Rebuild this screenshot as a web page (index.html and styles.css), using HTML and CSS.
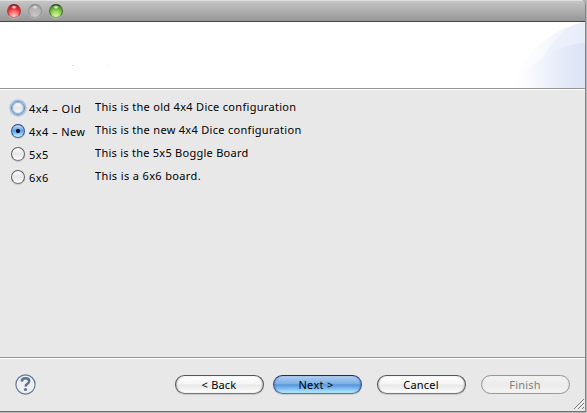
FILE: index.html
```html
<!DOCTYPE html>
<html lang="en">
<head>
<meta charset="utf-8">
<title>Board configuration</title>
<link rel="stylesheet" href="styles.css">
</head>
<body>
<div class="window">
  <div class="titlebar">
    <span class="light red"></span>
    <span class="light gray"></span>
    <span class="light green"></span>
  </div>
  <header class="banner">
    <svg class="speck" width="50" height="2" viewBox="0 0 50 2"><path d="M0 .5h2" stroke="#ddd"/><path d="M36 .5h2M42 .5h1" stroke="#f5f5f5"/></svg>
    <svg class="swoosh" width="75" height="66" viewBox="0 0 75 66">
      <defs>
        <linearGradient id="fade"><stop offset="0" stop-color="#fff"/><stop offset=".3" stop-color="#fbfcfe"/><stop offset="1" stop-color="#e9eefa"/></linearGradient>
        <linearGradient id="inner"><stop offset="0" stop-color="#fff"/><stop offset=".2" stop-color="#fbfcff"/><stop offset=".4" stop-color="#f2f5fc"/><stop offset=".7" stop-color="#e5eaf8"/><stop offset="1" stop-color="#dbe3f6"/></linearGradient>
      </defs>
      <path d="M2 66C15 28 43 6 75 0V66Z" fill="url(#fade)"/>
      <path d="M32 66V38C40 22 55 3 75 0V66Z" fill="#e6ecf9" opacity=".5"/>
      <path d="M0 66C23 38 49 22 75 21V66Z" fill="url(#inner)"/>
    </svg>
  </header>
  <main class="options">
    <label class="row"><span class="radio focus"></span><span class="name old">4x4 – Old</span><span class="desc d1">This is the old 4x4 Dice configuration</span></label>
    <label class="row"><span class="radio checked"></span><span class="name new">4x4 – New</span><span class="desc d2">This is the new 4x4 Dice configuration</span></label>
    <label class="row"><span class="radio"></span><span class="name">5x5</span><span class="desc d3">This is the 5x5 Boggle Board</span></label>
    <label class="row"><span class="radio"></span><span class="name">6x6</span><span class="desc d4">This is a 6x6 board.</span></label>
  </main>
  <footer class="footer">
    <span class="help"><svg width="21" height="21" viewBox="0 0 21 21" fill="none"><circle cx="10.5" cy="10.5" r="9.6" fill="#efeff0" stroke="#657998" stroke-width="1.2"/><path d="M6.8 7.6C6.9 5.4 8.4 4.3 10.5 4.3c2.2 0 3.7 1 3.7 2.9 0 2.6-3.6 2.5-3.6 5.2" stroke="#5d7191" stroke-width="2.5"/><circle cx="10.5" cy="15.500" r="1.600" fill="#5d7191"/></svg></span>
    <span class="button back">&lt; Back</span>
    <span class="button primary">Next &gt;</span>
    <span class="button cancel">Cancel</span>
    <span class="button disabled">Finish</span>
    <svg class="grip" width="12" height="12" viewBox="0 0 12 12"><path d="M1 11L11 1M5 11L11 5M9 11L11 9" stroke="#777"/><path d="M2 11.500L11.500 2M6 11.500L11.500 6" stroke="#fff" stroke-width=".6"/></svg>
  </footer>
</div>
</body>
</html>
```
FILE: styles.css
```css
* { box-sizing: border-box; }
html, body { margin: 0; height: 100%; overflow: hidden; }
body { font: 11px/14px "Noto Sans", "Open Sans", sans-serif; color: #000; background: #b5b5b5; }
.window {
  display: flex; flex-direction: column; width: 586px; height: 412px;
  border-right: 1px solid #858585; border-bottom: 1px solid #727272;
  border-top-right-radius: 5px; background: #e8e8e8; overflow: hidden;
}
.titlebar {
  display: flex; gap: 7px; height: 22px; padding: 3px 0 0 7px; flex: none;
  border-top: 1px solid #dedede; border-bottom: 1px solid #444;
  background: linear-gradient(#c5c5c5, #969696);
}
.light {
  width: 14px; height: 14px; border-radius: 50%; border: 1px solid #777;
  box-shadow: 0 1px 0 #ccc8;
}
.red { border-color: #6b2020 #a34444 #b77; background: radial-gradient(ellipse 3px 2px at 50% 18%, #fff, #fff0), radial-gradient(circle at 50% 92%, #ffc4c4 5%, #f66 40%, #dd252c 65%, #a41118 100%); }
.gray { border-color: #858585 #939393 #a5a5a5; background: radial-gradient(ellipse 3px 2px at 50% 18%, #eee, #eee0), radial-gradient(circle at 50% 90%, #c8c8c8, #b3b3b3 60%, #979797); }
.green { border-color: #244613 #4b7332 #8a9f79; background: radial-gradient(ellipse 3px 2px at 50% 18%, #fff, #fff0), radial-gradient(circle at 50% 92%, #d6f598 5%, #9bd55d 40%, #60ac35 65%, #2b6611 100%); }
.banner {
  display: flex; justify-content: space-between; align-items: flex-start;
  height: 68px; flex: none; background: #fff; padding-left: 72px;
  border-bottom: 1px solid #fff; box-shadow: inset 0 -1px #949494;
}
.speck { margin-top: 43px; }
.swoosh { display: block; }
.options { flex: 1; padding: 7px 0 0 11px; }
.row { display: flex; height: 23px; align-items: flex-start; }
.radio {
  width: 14px; height: 14px; margin: 4px 4px 0 0; border-radius: 50%; flex: none;
  border: 1px solid #606060; border-bottom-color: #777;
  background: linear-gradient(#fff, #e6e6e6 50%, #fff); box-shadow: 0 1px 1px #0002;
}
.focus { border: 1px solid #658bb8; box-shadow: 0 0 1px 1.5px #7fa9d8b0, inset 0 0 1px 1px #8fb2dc; }
.checked {
  border-color: #233a80 #355891 #47698f;
  background: radial-gradient(circle, #071329 1.6px, #07132900 2.6px), linear-gradient(#c8e0f8, #5b9ee5 48%, #7fbdf3 65%, #c4f4ff);
}
.name { width: 66px; padding-top: 5px; white-space: nowrap; letter-spacing: .4px; }
.old { letter-spacing: .5px; }
.new { letter-spacing: .42px; }
.desc { padding-top: 3px; white-space: nowrap; letter-spacing: .3px; }
.d3 { letter-spacing: .26px; }
.d4 { letter-spacing: .36px; }
.footer {
  position: relative; display: flex; height: 54px; flex: none; align-items: flex-start;
  padding: 17px 0 0 15px; border-top: 1px solid #949494; box-shadow: inset 0 1px #fff;
}
.help { height: 21px; width: 160px; margin-top: -1px; }
.help svg { display: block; }
.button {
  width: 89px; height: 19px; margin-right: 15px; border-radius: 10px; text-align: center;
  line-height: 17px; border: 1px solid #555; border-bottom-color: #777;
  letter-spacing: .2px; padding-right: 1px;
  background: linear-gradient(#fff, #f5f5f5 48%, #e7e7e7 52%, #fff);
  box-shadow: 0 1px 1px #0002, inset 1px 0 1px #0003, inset -1px 0 1px #0003;
}
.primary {
  margin-left: -6px; border-color: #20208c #35528d #56789d; letter-spacing: .3px; padding-right: 3px;
  background: linear-gradient(#afcff1, #7eb0e6 45%, #5795da 52%, #82bdf1 75%, #b9f0ff);
}
.disabled { color: #808080; border-color: #999; background: linear-gradient(#f3f3f3, #ececec 50%, #f3f3f3); box-shadow: inset 1px 0 1px #0001, inset -1px 0 1px #0001; }
.grip { position: absolute; right: 0; bottom: 1px; }
```
